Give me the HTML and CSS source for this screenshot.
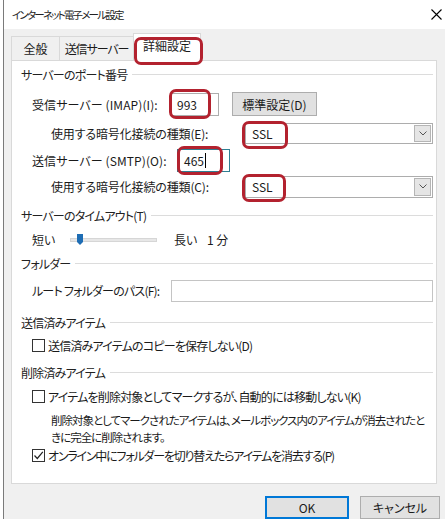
FILE: index.html
```html
<!DOCTYPE html>
<html lang="ja">
<head>
    <meta charset="UTF-8">
    <title>インターネット電子メール設定</title>
    <link rel="stylesheet" href="styles.css">
</head>
<body>
    <div class="screen">
        <div class="behind"></div>
        <div class="window">
            <div class="titlebar">
                <span class="title">インターネット電子メール設定</span>
                <svg class="close" width="11" height="11" viewBox="0 0 11 11">
                    <path d="M0.5 0.5 L10.5 10.5 M10.5 0.5 L0.5 10.5" stroke="#000" stroke-width="1.1" fill="none"/>
                </svg>
            </div>

            <div class="tabs">
                <div class="tab tab-general">全般</div>
                <div class="tab tab-send">送信サーバー</div>
                <div class="tab tab-detail active">詳細設定<span class="mark mark-tab"></span></div>
            </div>

            <div class="panel">
                <div class="group-head head-port">サーバーのポート番号</div>

                <div class="row row-imap">
                    <span class="label label-imap">受信サーバー (IMAP)(I):</span>
                    <span class="edit edit-imap">993<span class="mark mark-imap"></span></span>
                    <span class="btn btn-std">標準設定(D)</span>
                </div>

                <div class="row row-sub row-enc-e">
                    <span class="label label-enc">使用する暗号化接続の種類(E):</span>
                    <span class="combo">SSL
                        <span class="combo-arrow">
                            <svg width="8" height="5" viewBox="0 0 8 5"><path d="M0.5 0.5 L4 4 L7.5 0.5" stroke="#555" fill="none"/></svg>
                        </span>
                        <span class="mark mark-enc-e"></span>
                    </span>
                </div>

                <div class="row row-smtp">
                    <span class="label label-smtp">送信サーバー (SMTP)(O):</span>
                    <span class="edit edit-smtp">465<span class="caret"></span><span class="mark mark-smtp"></span></span>
                </div>

                <div class="row row-sub row-enc-c">
                    <span class="label label-enc">使用する暗号化接続の種類(C):</span>
                    <span class="combo">SSL
                        <span class="combo-arrow">
                            <svg width="8" height="5" viewBox="0 0 8 5"><path d="M0.5 0.5 L4 4 L7.5 0.5" stroke="#555" fill="none"/></svg>
                        </span>
                        <span class="mark mark-enc-c"></span>
                    </span>
                </div>

                <div class="group-head head-timeout">サーバーのタイムアウト(T)</div>

                <div class="row row-slider">
                    <span class="label label-short">短い</span>
                    <span class="track">
                        <svg class="thumb" width="6" height="11" viewBox="0 0 6 11"><path d="M0 0 H6 V8 L3 11 L0 8 Z" fill="#1e6db4"/></svg>
                    </span>
                    <span class="label-long">長い</span>
                    <span class="label-time">1 分</span>
                </div>

                <div class="group-head head-folder">フォルダー</div>

                <div class="row row-path">
                    <span class="label label-path">ルート フォルダーのパス(F):</span>
                    <span class="edit edit-path"></span>
                </div>

                <div class="group-head head-sent">送信済みアイテム</div>

                <div class="row row-check row-sent">
                    <span class="checkbox"></span>
                    <span>送信済みアイテムのコピーを保存しない(D)</span>
                </div>

                <div class="group-head head-deleted">削除済みアイテム</div>

                <div class="row row-check row-mark">
                    <span class="checkbox"></span>
                    <span>アイテムを削除対象としてマークするが、自動的には移動しない(K)</span>
                </div>

                <p class="desc">削除対象としてマークされたアイテムは、メールボックス内のアイテムが消去されたと<br>きに完全に削除されます。</p>

                <div class="row row-check row-online">
                    <span class="checkbox">
                        <svg width="11" height="11" viewBox="0 0 11 11"><path d="M1.5 5.5 L4.3 8.5 L9.8 1.8" stroke="#222" stroke-width="1.2" fill="none"/></svg>
                    </span>
                    <span class="text-online">オンライン中にフォルダーを切り替えたらアイテムを消去する(P)</span>
                </div>
            </div>

            <div class="buttons">
                <span class="btn btn-ok">OK</span>
                <span class="btn btn-cancel">キャンセル</span>
            </div>
        </div>
    </div>
</body>
</html>
```

FILE: styles.css
```css
* {
    box-sizing: border-box;
}
body {
    margin: 0;
    font-family: "Noto Sans CJK JP", sans-serif;
    font-size: 12px;
    font-feature-settings: "palt";
    letter-spacing: -0.8px;
    color: #1a1a1a;
    background-color: #fff;
    white-space: nowrap;
}
.screen {
    display: flex;
    width: 445px;
    height: 519px;
    overflow: hidden;
}
.behind {
    width: 3px;
    flex-shrink: 0;
    background-color: #fff;
}
.window {
    flex: 1;
    min-width: 0;
    display: flex;
    flex-direction: column;
    background-color: #f0f0f0;
    border-left: 1px solid #7a7a7a;
}
.titlebar {
    height: 29px;
    background-color: #fff;
    display: flex;
    align-items: center;
    justify-content: space-between;
    padding: 0 3px 0 8px;
}
.title {
    font-size: 10.5px;
    letter-spacing: -1.8px;
    color: #222;
}

/* tabs */
.tabs {
    display: flex;
    align-items: flex-end;
    height: 31px;
    padding-left: 7px;
}
.tab {
    height: 24px;
    display: flex;
    align-items: center;
    justify-content: center;
    border: 1px solid #d9d9d9;
    border-bottom: none;
    margin-right: -1px;
}
.tab-general { width: 49px; letter-spacing: 0; }
.tab-send { width: 75px; letter-spacing: -1.1px; }
.tab-detail { width: 68px; letter-spacing: 0; }
.tab.active {
    position: relative;
    z-index: 1;
    height: 28px;
    margin-bottom: -1px;
    background-color: #fff;
    padding-bottom: 3px;
}

/* red annotation marks */
.mark {
    position: absolute;
    border: 3px solid #b3222f;
    border-radius: 7px;
    pointer-events: none;
}
.mark-tab { left: 0; top: 3px; width: 69px; height: 28px; }
.mark-imap { left: -2px; top: -5px; width: 42px; height: 30px; }
.mark-smtp { left: -1px; top: -4px; width: 46px; height: 29px; }
.mark-enc-e { left: -4px; top: -3px; width: 46px; height: 28px; }
.mark-enc-c { left: -4px; top: -3px; width: 44px; height: 28px; }

/* panel */
.panel {
    height: 427px;
    margin: 0 8px 0 7px;
    padding: 0 3px 0 9px;
    background-color: #fff;
    border: 1px solid #d9d9d9;
    display: flex;
    flex-direction: column;
    overflow: hidden;
}
.group-head {
    display: flex;
    align-items: center;
    gap: 5px;
    height: 16px;
    color: #222;
}
.group-head::after {
    content: "";
    flex: 1;
    border-top: 1px solid #dcdcdc;
}
.head-port { margin-top: 6px; }
.head-timeout { margin-top: 10px; }
.head-folder { margin-top: 7px; }
.head-sent { margin-top: 13px; }
.head-deleted { margin-top: 11px; }

.row {
    display: flex;
    align-items: center;
    padding-left: 11px;
}
.row-sub {
    padding-left: 30px;
}
.row-imap { margin-top: 9px; height: 25px; }
.row-enc-e { margin-top: 6px; height: 21px; }
.row-smtp { margin-top: 4px; height: 25px; }
.row-enc-c { margin-top: 3px; height: 22px; }
.row-slider { margin-top: 7px; height: 18px; }
.row-path { margin-top: 8px; height: 22px; }
.row-sent { margin-top: 6px; }
.row-mark { margin-top: 7px; }
.row-online { margin-top: 1px; }

.label-imap { width: 138px; letter-spacing: 0.1px; }
.label-smtp { width: 145px; letter-spacing: 0.1px; }
.label-enc { width: 194px; letter-spacing: -0.15px; }
.label-path { width: 139px; }

.edit {
    position: relative;
    display: flex;
    align-items: center;
    height: 23px;
    padding-left: 6px;
    background-color: #fff;
    border: 1px solid #adadad;
    letter-spacing: 0;
}
.edit-imap { width: 49px; }
.edit-smtp {
    width: 53px;
    border-color: #2f7f93;
}
.edit-path {
    width: 262px;
    height: 22px;
    border-color: #c4c4c4;
}
.caret {
    width: 1px;
    height: 15px;
    margin-left: 1px;
    background-color: #000;
}

.btn {
    display: flex;
    align-items: center;
    justify-content: center;
    background-color: #e1e1e1;
    border: 1px solid #adadad;
    letter-spacing: 0;
}
.btn-std {
    width: 85px;
    height: 24px;
    margin-left: 13px;
}

.combo {
    position: relative;
    display: flex;
    align-items: center;
    width: 188px;
    height: 100%;
    padding-left: 6px;
    border: 1px solid #adadad;
    background-color: #fff;
    letter-spacing: 0;
}
.combo-arrow {
    position: absolute;
    right: 1px;
    top: 1px;
    bottom: 1px;
    width: 17px;
    display: flex;
    align-items: center;
    justify-content: center;
    background-color: #e5e5e5;
    border: 1px solid #b5b5b5;
}

/* slider */
.label-short { width: 38px; letter-spacing: 0; }
.track {
    position: relative;
    width: 87px;
    height: 4px;
    background-color: #e7e7e7;
    border: 1px solid #d6d6d6;
}
.thumb {
    position: absolute;
    left: 6px;
    top: -5px;
}
.label-long { margin-left: 17px; width: 33px; letter-spacing: 0; }
.label-time { letter-spacing: 0; }

/* checkboxes */
.row-check {
    height: 17px;
    gap: 3px;
}
.checkbox {
    width: 13px;
    height: 13px;
    flex-shrink: 0;
    border: 1px solid #333;
    background-color: #fff;
    display: flex;
    align-items: center;
    justify-content: center;
}
.text-online {
    letter-spacing: -1.2px;
}
.desc {
    margin: 7px 0 0;
    padding-left: 30px;
    font-size: 11.5px;
    line-height: 17px;
    letter-spacing: -1px;
}

/* bottom buttons */
.buttons {
    display: flex;
    justify-content: flex-end;
    gap: 11px;
    margin-top: 12px;
    padding-right: 5px;
}
.btn-ok {
    width: 84px;
    height: 23px;
    border: 2px solid #0078d7;
}
.btn-cancel {
    width: 80px;
    height: 23px;
}
```
